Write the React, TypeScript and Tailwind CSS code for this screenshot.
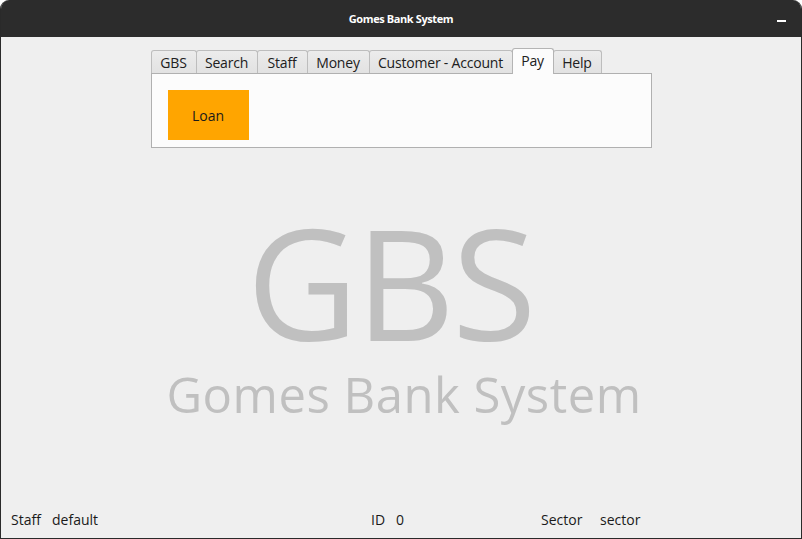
const tabs = [
  { label: "GBS", w: "w-[46px]" },
  { label: "Search", w: "w-[62px]" },
  { label: "Staff", w: "w-[51px]" },
  { label: "Money", w: "w-[63px]" },
  { label: "Customer - Account", w: "w-[144px]" },
  { label: "Pay", w: "w-[42px]", active: true },
  { label: "Help", w: "w-[49px]" },
];

export default function App() {
  return (
    <div className="w-[802px] h-[539px] bg-white font-['Open_Sans',sans-serif]">
      <div className="w-full h-full flex flex-col rounded-t-[9px] overflow-hidden border-x border-b border-[#2a2a2a] bg-[#efefef]">
        {/* title bar */}
        <div className="h-[37px] shrink-0 bg-[#2c2c2c] flex items-center justify-center relative pt-[2px]">
          <span className="text-white text-[11px] font-bold tracking-[-0.4px]">Gomes Bank System</span>
          <span className="absolute right-[15px] top-[20px] w-[9px] h-[2px] bg-white" />
        </div>

        {/* tab widget */}
        <div className="w-[501px] mx-auto mt-[10px]">
          <div className="flex items-end h-[26px] text-[14px] text-[#202020] tracking-[-0.2px]">
            {tabs.map((t, i) =>
              t.active ? (
                <div
                  key={t.label}
                  className={`${t.w} ${i > 0 ? "-ml-px" : ""} h-[26px] -mb-px relative z-10 flex items-center justify-center bg-[#fcfcfc] border border-b-0 border-[#b4b4b4] rounded-t-[3px]`}
                >
                  <span className="-mt-[3px]">{t.label}</span>
                </div>
              ) : (
                <div
                  key={t.label}
                  className={`${t.w} ${i > 0 ? "-ml-px" : ""} h-[23px] flex items-center justify-center bg-gradient-to-b from-[#ececec] to-[#e2e2e2] border border-b-0 border-[#bdbdbd] rounded-t-[3px]`}
                >
                  <span>{t.label}</span>
                </div>
              )
            )}
          </div>
          <div className="h-[75px] bg-[#fcfcfc] border border-[#b0b0b0] pt-[16px] pl-[16px]">
            <button className="w-[81px] h-[50px] bg-[#ffa500] text-[14px] text-[#1a1a1a] flex items-center justify-center">
              Loan
            </button>
          </div>
        </div>

        {/* logo */}
        <div className="flex-1 flex flex-col items-center pt-[48px] text-[#c0c0c0]">
          <div className="text-[154px] leading-[170px] tracking-[-3px] mr-[22px]">GBS</div>
          <div className="text-[49px] leading-[52px] mt-[2px] ml-[6px] tracking-[0.5px]">Gomes Bank System</div>
        </div>

        {/* status bar */}
        <div className="h-[36px] shrink-0 flex items-center text-[14px] text-[#1a1a1a] pb-[2px]">
          <span className="ml-[10px] w-[41px]">Staff</span>
          <span className="w-[319px]">default</span>
          <span className="w-[25px]">ID</span>
          <span className="w-[145px]">0</span>
          <span className="w-[59px]">Sector</span>
          <span>sector</span>
        </div>
      </div>
    </div>
  );
}
